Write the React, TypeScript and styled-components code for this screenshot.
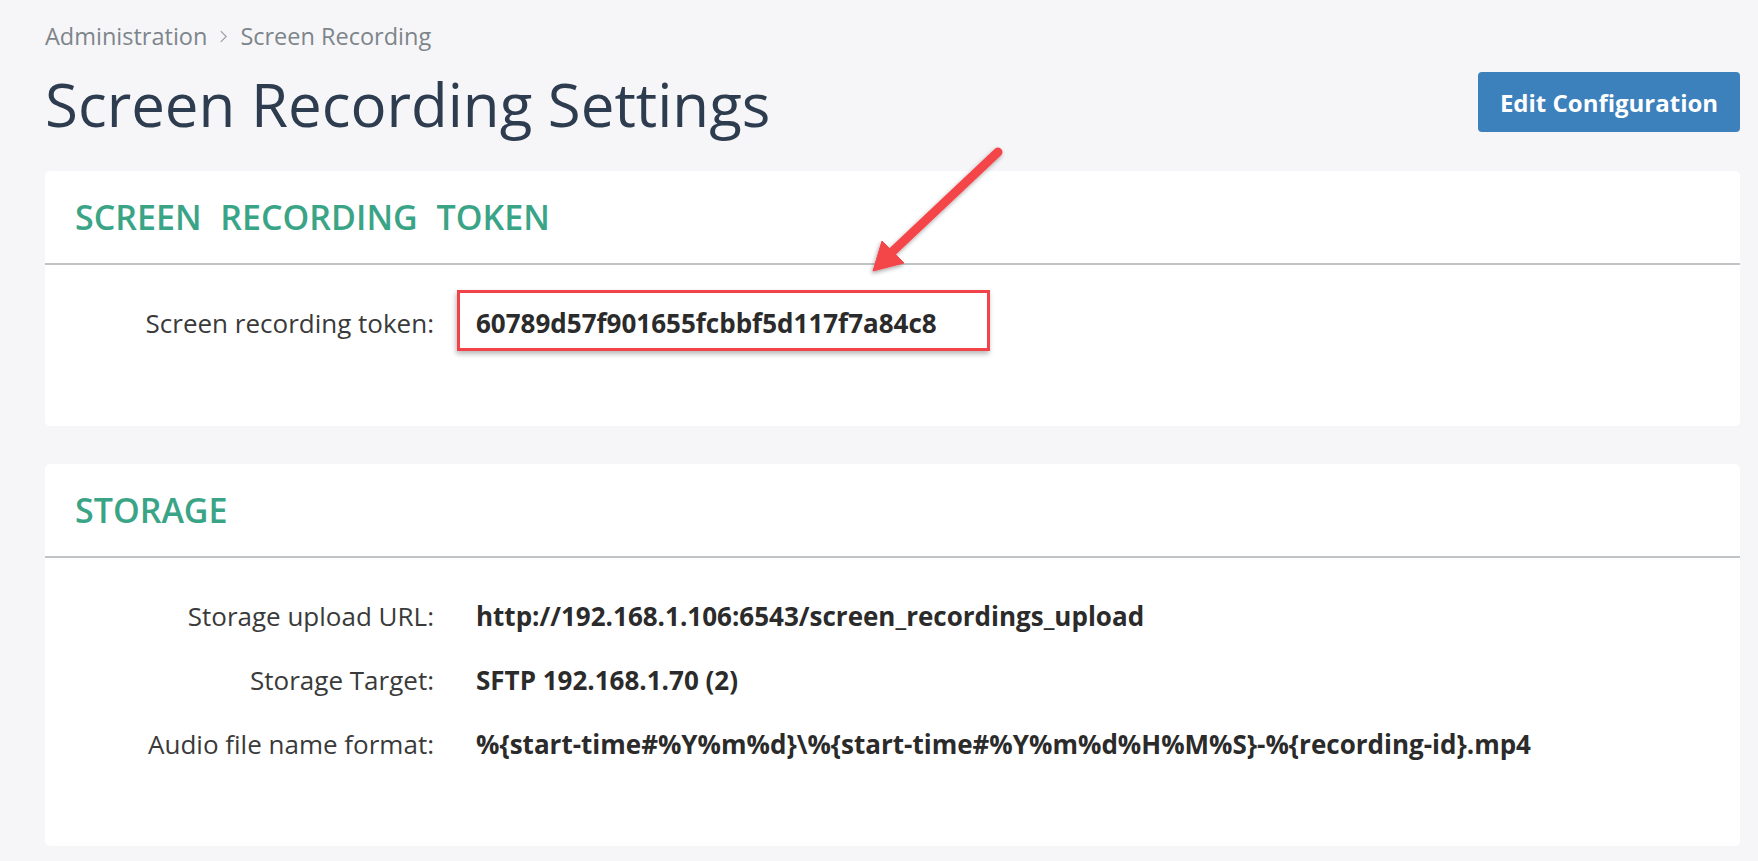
import styled, { createGlobalStyle } from 'styled-components';

const GlobalStyle = createGlobalStyle`
  html, body {
    margin: 0;
    padding: 0;
    background: #f6f6f8;
  }
  body {
    font-family: 'Open Sans', 'Noto Sans', sans-serif;
    color: #333;
  }
`;

type Field = { label: string; value: string };

const storageFields: Field[] = [
  { label: 'Storage upload URL:', value: 'http://192.168.1.106:6543/screen_recordings_upload' },
  { label: 'Storage Target:', value: 'SFTP 192.168.1.70 (2)' },
  { label: 'Audio file name format:', value: '%{start-time#%Y%m%d}\\%{start-time#%Y%m%d%H%M%S}-%{recording-id}.mp4' },
];

export default function App() {
  return (
    <>
      <GlobalStyle />
      <Page>
        <Breadcrumb>
          <Crumb>Administration</Crumb>
          <Chevron viewBox="0 0 10 16" aria-hidden="true">
            <path d="M2 2l6 6-6 6" fill="none" stroke="currentColor" strokeWidth="1.3" />
          </Chevron>
          <Crumb>Screen Recording</Crumb>
        </Breadcrumb>

        <HeaderRow>
          <Title>Screen Recording Settings</Title>
          <EditButton type="button">Edit Configuration</EditButton>
        </HeaderRow>

        <Card>
          <CardHeader>
            <CardTitle>Screen Recording Token</CardTitle>
          </CardHeader>
          <CardBody $top={25} $bottom={75}>
            <Row>
              <Label>Screen recording token:</Label>
              <Highlight>
                <Value>60789d57f901655fcbbf5d117f7a84c8</Value>
              </Highlight>
            </Row>
          </CardBody>
        </Card>

        <Card $gap={38}>
          <CardHeader>
            <CardTitle>Storage</CardTitle>
          </CardHeader>
          <CardBody $top={41} $bottom={85}>
            <Rows>
              {storageFields.map((f) => (
                <Row key={f.label}>
                  <Label>{f.label}</Label>
                  <Value>{f.value}</Value>
                </Row>
              ))}
            </Rows>
          </CardBody>
        </Card>

        <Arrow viewBox="850 130 170 160" aria-hidden="true">
          <defs>
            <filter id="arrowShadow" x="-20%" y="-20%" width="140%" height="140%">
              <feDropShadow dx="-1" dy="2" stdDeviation="2" floodColor="#000" floodOpacity="0.35" />
            </filter>
          </defs>
          <g filter="url(#arrowShadow)" fill="#f4444a" stroke="#f4444a">
            <line x1="998" y1="152" x2="892" y2="252" strokeWidth="9" strokeLinecap="round" />
            <polygon points="873,271 882,241 904,263" strokeWidth="1" strokeLinejoin="round" />
          </g>
        </Arrow>
      </Page>
    </>
  );
}

const Page = styled.div`
  position: relative;
  padding: 20px 18px 14px 45px;
`;

const Breadcrumb = styled.div`
  display: flex;
  align-items: center;
  gap: 12px;
  height: 32px;
  color: #7d858b;
  font-size: 23.5px;
  line-height: 32px;
`;

const Crumb = styled.span``;

const Chevron = styled.svg`
  width: 9px;
  height: 15px;
  color: #9aa0a5;
`;

const HeaderRow = styled.div`
  display: flex;
  justify-content: space-between;
  align-items: flex-start;
  margin-top: 11px;
`;

const Title = styled.h1`
  margin: 0;
  font-size: 60px;
  font-weight: 400;
  line-height: 82px;
  color: #2e3c4f;
`;

const EditButton = styled.button`
  margin-top: 9px;
  width: 262px;
  height: 60px;
  border: none;
  border-radius: 4px;
  background: #3c80bc;
  color: #fff;
  font-family: 'Open Sans', sans-serif;
  font-size: 24px;
  font-weight: 700;
  cursor: pointer;
`;

const Card = styled.section<{ $gap?: number }>`
  margin-top: ${(p) => p.$gap ?? 26}px;
  background: #fff;
  border-radius: 5px;
  overflow: hidden;
`;

const CardHeader = styled.div`
  display: flex;
  align-items: center;
  height: 92px;
  padding: 0 30px;
  border-bottom: 2px solid #c1c4c7;
`;

const CardTitle = styled.h2`
  margin: 0;
  font-size: 34px;
  font-weight: 600;
  line-height: 46px;
  word-spacing: 10px;
  text-transform: uppercase;
  color: #3aa486;
`;

const CardBody = styled.div<{ $top: number; $bottom: number }>`
  padding: ${(p) => p.$top}px 0 ${(p) => p.$bottom}px;
`;

const Rows = styled.div`
  display: flex;
  flex-direction: column;
  gap: 30px;
`;

const Row = styled.div`
  display: grid;
  grid-template-columns: 389px 1fr;
  column-gap: 42px;
  align-items: baseline;
`;

const Label = styled.span`
  text-align: right;
  font-size: 26px;
  line-height: 34px;
  color: #3a3a3a;
`;

const Value = styled.span`
  font-size: 26px;
  line-height: 34px;
  font-weight: 700;
  color: #2b2b2b;
`;

const Highlight = styled.div`
  justify-self: start;
  margin-left: -19px;
  padding: 13px 50px 8px 16px;
  border: 3px solid #f2434a;
  box-shadow: -1px 3px 5px rgba(0, 0, 0, 0.28);
`;

const Arrow = styled.svg`
  position: absolute;
  left: 850px;
  top: 130px;
  width: 170px;
  height: 160px;
  pointer-events: none;
`;
